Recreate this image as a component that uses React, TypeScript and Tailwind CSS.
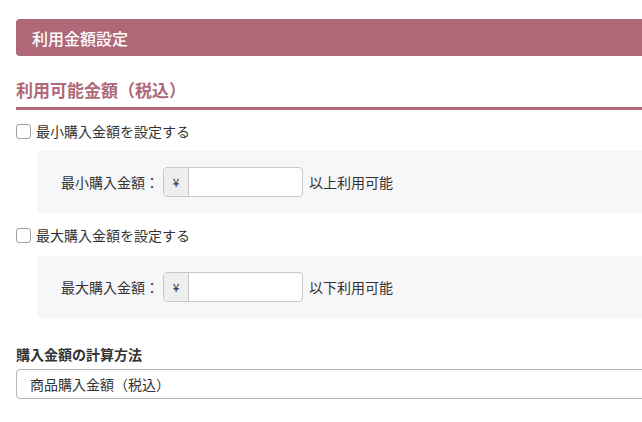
const font = { fontFamily: '"Noto Sans CJK JP", "Noto Sans", sans-serif' };

function CheckRow({ label }: { label: string }) {
  return (
    <label className="flex items-center h-5 gap-[5px] text-[14px] text-[#333]">
      <span className="w-[15px] h-[15px] rounded-[3px] border border-[#a0a0a0] bg-white" />
      <span>{label}</span>
    </label>
  );
}

function AmountPanel({ label, suffix, top }: { label: string; suffix: string; top: string }) {
  return (
    <div className={`${top} ml-[21px] bg-[#f7f6f9] py-4 pl-6 flex items-center text-[14px] text-[#333]`}>
      <span className="mr-[4px]">{label}：</span>
      <div className="flex h-[30px] w-[140px] rounded-[4px] border border-[#c8c8c8] overflow-hidden bg-white">
        <span className="w-[25px] flex items-center justify-center bg-[#eeeeee] border-r border-[#c8c8c8] text-[12px]">¥</span>
        <input className="flex-1 min-w-0 outline-none" />
      </div>
      <span className="ml-[6px]">{suffix}</span>
    </div>
  );
}

export default function App() {
  return (
    <div className="w-[642px] h-[422px] bg-white overflow-hidden pl-4 pt-[19px]" style={font}>
      <div className="w-[700px]">
        <div className="h-[37px] rounded-l-[4px] bg-[#ae6878] pl-4 flex items-center text-white text-[16px] font-medium">
          利用金額設定
        </div>

        <h2 className="mt-[22px] text-[17px] leading-6 font-bold text-[#ae6878] pb-[5px] border-b-[3px] border-[#ae6878]">
          利用可能金額（税込）
        </h2>

        <div className="mt-[11px]">
          <CheckRow label="最小購入金額を設定する" />
        </div>
        <AmountPanel top="mt-[10px]" label="最小購入金額" suffix="以上利用可能" />

        <div className="mt-[12px]">
          <CheckRow label="最大購入金額を設定する" />
        </div>
        <AmountPanel top="mt-[11px]" label="最大購入金額" suffix="以下利用可能" />

        <div className="mt-[26px] text-[14px] leading-5 font-bold text-[#333]">購入金額の計算方法</div>
        <div className="mt-[5px] h-[30px] rounded-[4px] border border-[#b5b5b5] pl-[13px] flex items-center text-[14px] text-[#333]">
          商品購入金額（税込）
        </div>
      </div>
    </div>
  );
}
